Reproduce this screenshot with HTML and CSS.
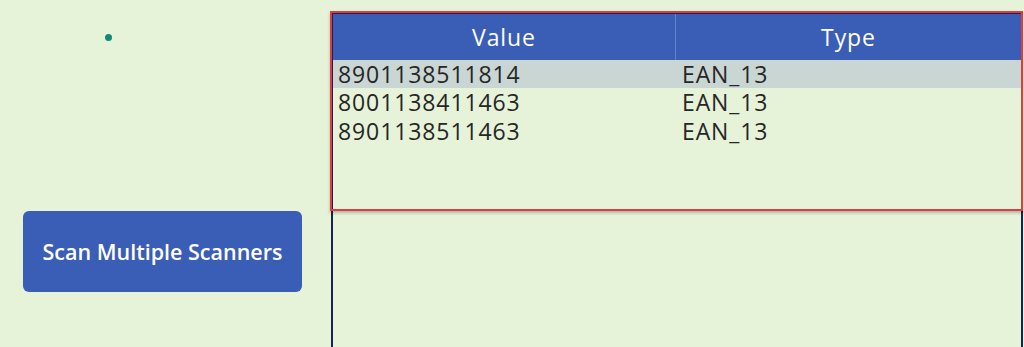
FILE: index.html
```html
<!DOCTYPE html>
<html lang="en">
<head>
  <meta charset="UTF-8" />
  <title>Scanner</title>
  <link rel="stylesheet" href="styles.css">
</head>
<body>
  <div class="screen">
    <div class="side">
      <span class="dot"></span>
      <button class="scan-btn">Scan Multiple Scanners</button>
    </div>

    <div class="panel">
      <div class="grid-head">
        <div class="col">Value</div>
        <div class="col">Type</div>
      </div>
      <div class="grid-row selected">
        <div class="cell">8901138511814</div>
        <div class="cell">EAN_13</div>
      </div>
      <div class="grid-row">
        <div class="cell">8001138411463</div>
        <div class="cell">EAN_13</div>
      </div>
      <div class="grid-row">
        <div class="cell">8901138511463</div>
        <div class="cell">EAN_13</div>
      </div>
      <!-- contour de sélection -->
      <div class="selection"></div>
    </div>
  </div>
</body>
</html>
```

FILE: styles.css
```css
body {
  margin: 0;
  background: #e6f3d9;
  font-family: 'Open Sans', sans-serif;
  overflow: hidden;
}

.screen {
  display: flex;
  height: 347px;
}

.side {
  width: 331px;
  flex-shrink: 0;
  padding: 34px 0 0 23px;
  box-sizing: border-box;
}

.dot {
  display: block;
  width: 7px;
  height: 7px;
  margin-left: 82px;
  border-radius: 50%;
  background: #0f8a76;
}

.scan-btn {
  display: block;
  margin-top: 170px;
  width: 279px;
  height: 81px;
  border: none;
  border-radius: 6px;
  background: #3a5db5;
  color: #fff;
  font-family: 'Open Sans', sans-serif;
  font-size: 21.5px;
  font-weight: 600;
}

.panel {
  position: relative;
  margin-top: 12px;
  width: 692px;
  border: 2px solid #16224f;
  border-bottom: none;
  box-sizing: border-box;
}

.grid-head {
  display: grid;
  grid-template-columns: 343px 1fr;
  height: 46px;
  background: #3a5db5;
  color: #fff;
}

.grid-head .col {
  font-size: 23px;
  letter-spacing: 0.9px;
  line-height: 46px;
  text-align: center;
}

.grid-head .col:first-child {
  border-right: 1px solid #6283cc;
}

.grid-row {
  display: grid;
  grid-template-columns: 344px 1fr;
  height: 28.3px;
  color: #262626;
}

.grid-row.selected {
  background: #c9d6d3;
}

.cell {
  padding-left: 5px;
  font-size: 23px;
  letter-spacing: 0.9px;
  line-height: 28px;
}

.selection {
  position: absolute;
  left: -3px;
  top: -3px;
  right: -2px;
  height: 196px;
  border: 2px solid #e23a41;
  box-shadow: 0 2px 3px rgba(0, 0, 0, 0.25);
}
```
